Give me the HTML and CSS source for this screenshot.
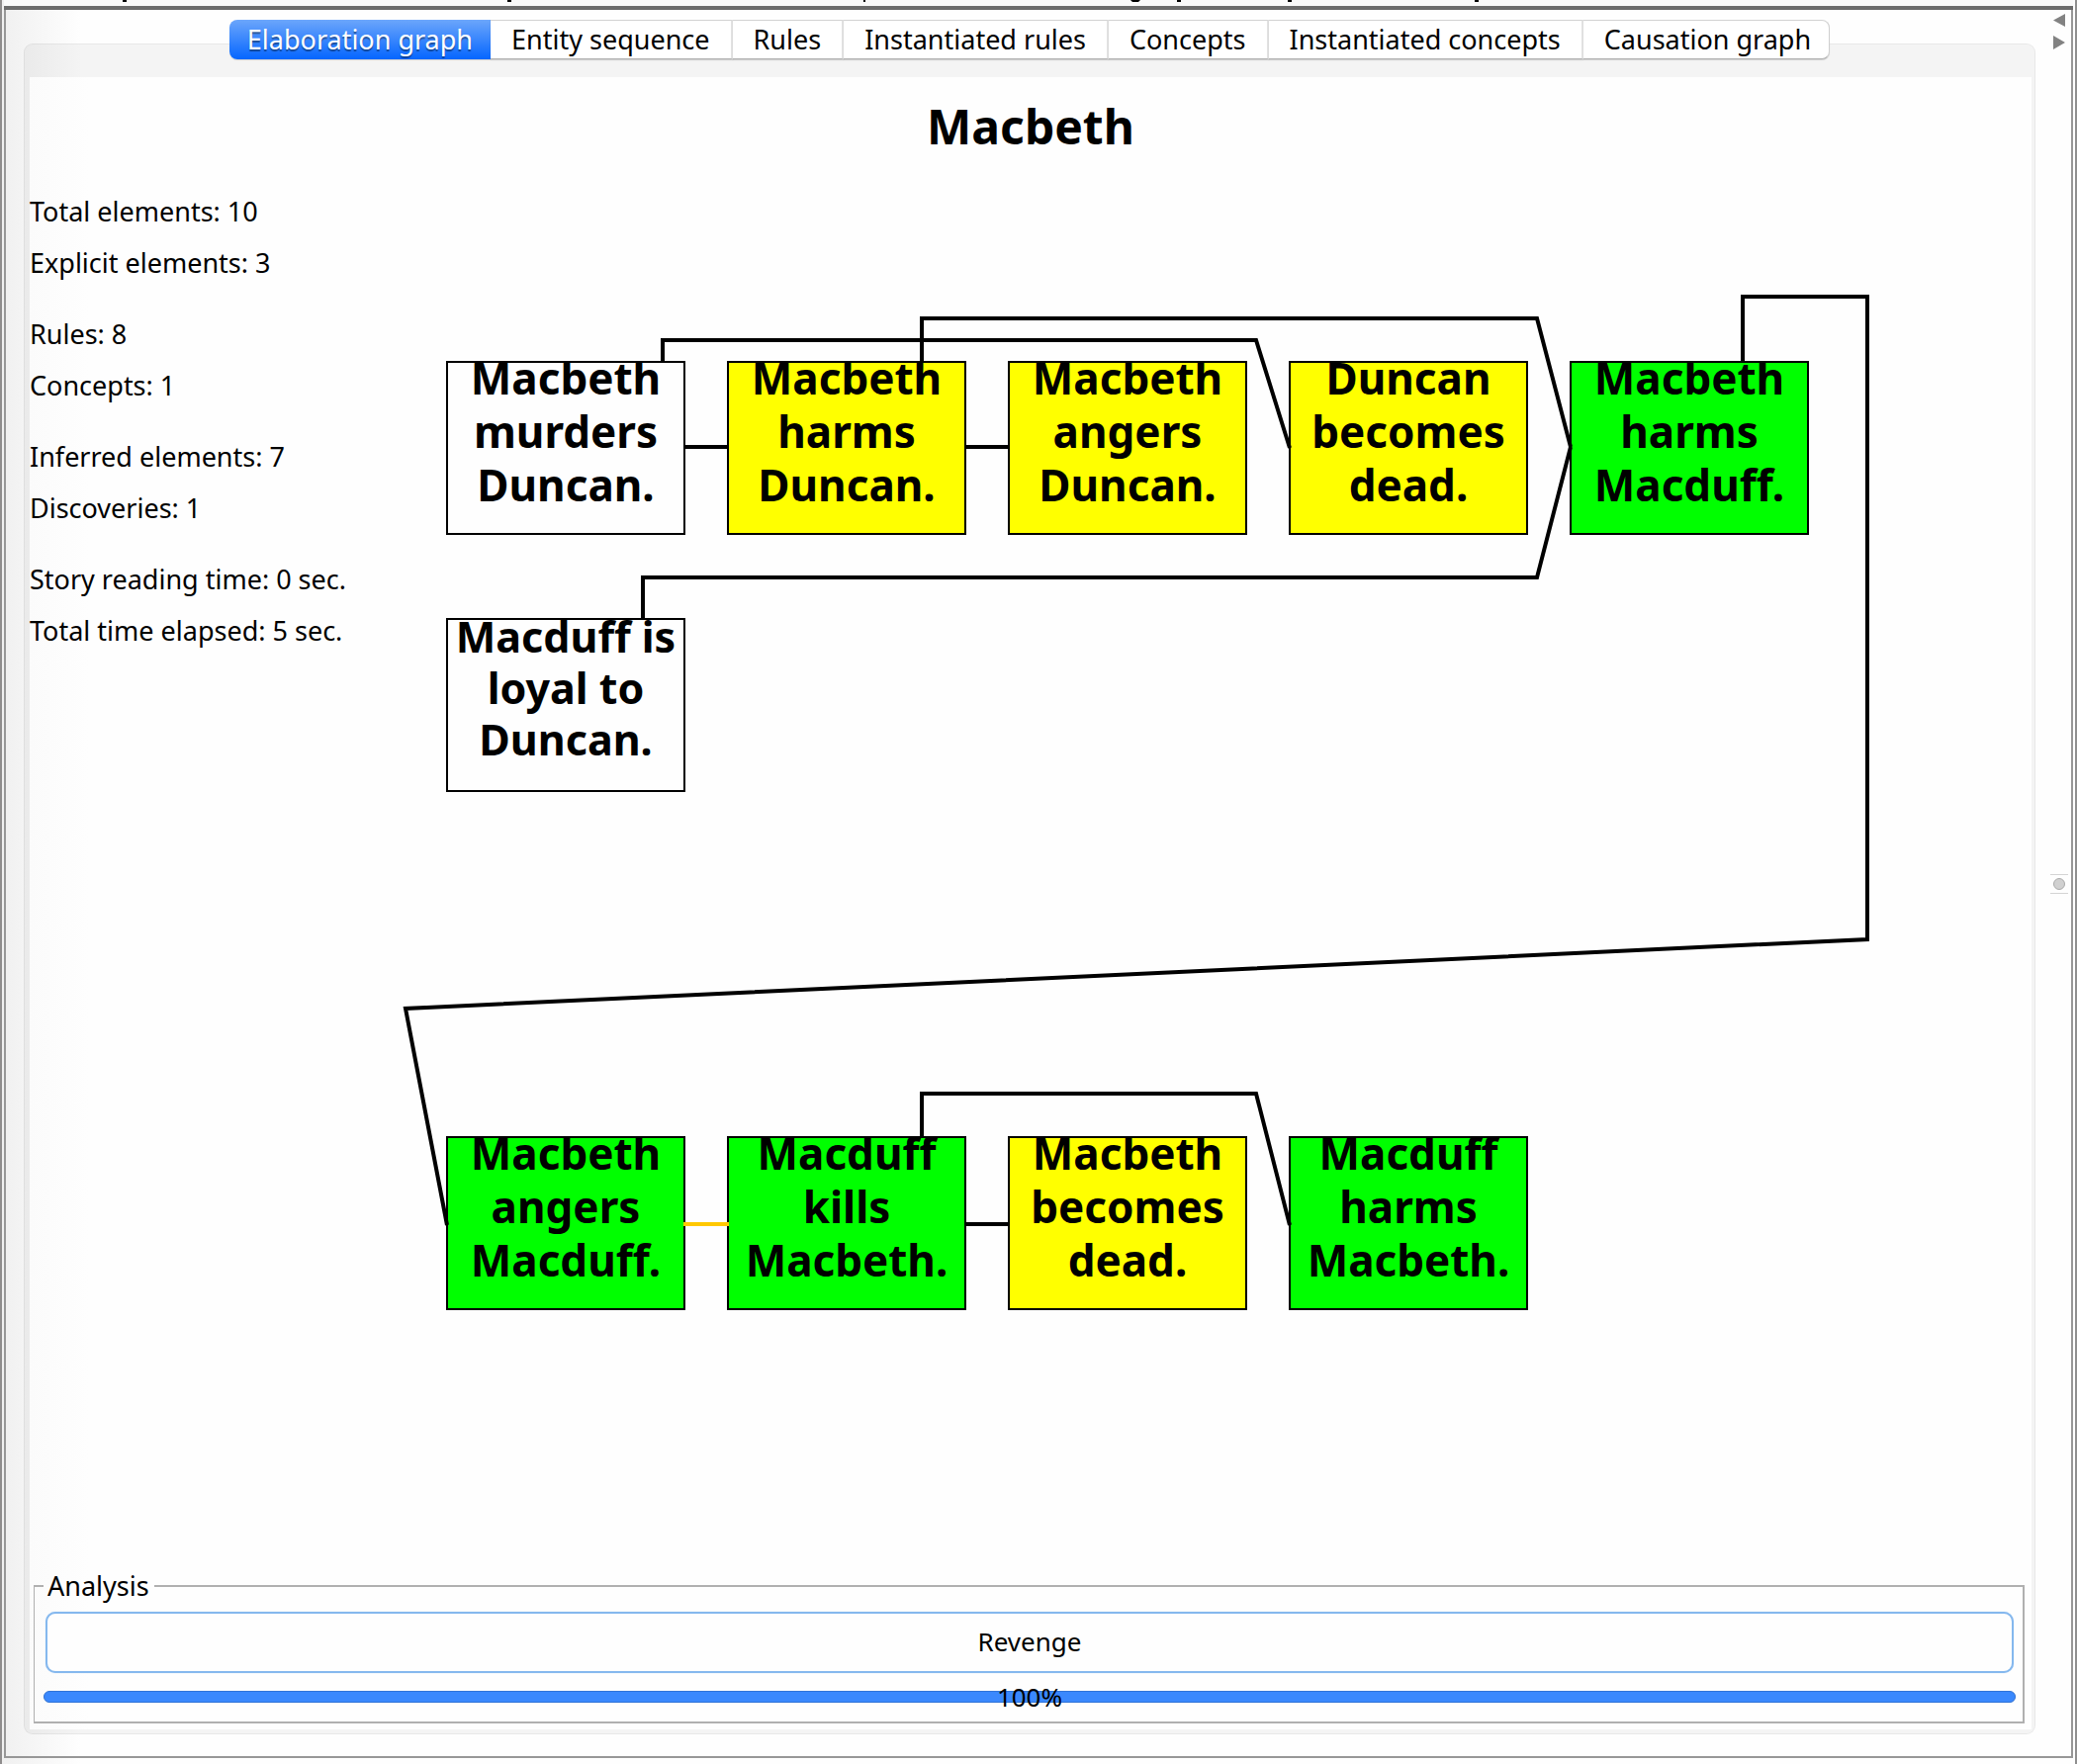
FILE: index.html
```
<!DOCTYPE html>
<html lang="en">
<head>
<meta charset="utf-8">
<title>Macbeth</title>
<link rel="stylesheet" href="styles.css">
</head>
<body>
<div class="window">
  <div class="strip">
    <svg class="strip-marks" width="1600" height="2" aria-hidden="true">
      <path d="M120 0h4v2h-4zM509 0h4v2h-4zM869 0h2v2h-2zM1139 0h10l-2 2h-6zM1186 0h4v2h-4zM1298 0h4v2h-4zM1487 0h4v2h-4z"/>
    </svg>
  </div>
  <div class="frame">
    <main class="viewer">
      <nav class="tabs" role="tablist" aria-label="Views">
        <button class="tab tab-active" role="tab" aria-selected="true">Elaboration graph</button>
        <button class="tab" role="tab">Entity sequence</button>
        <button class="tab" role="tab">Rules</button>
        <button class="tab" role="tab">Instantiated rules</button>
        <button class="tab" role="tab">Concepts</button>
        <button class="tab" role="tab">Instantiated concepts</button>
        <button class="tab" role="tab">Causation graph</button>
      </nav>
      <section class="panel">
        <div class="content">
          <h1 class="title">Macbeth</h1>
          <div class="story">
            <aside class="stats">
              <div><p>Total elements: 10</p><p>Explicit elements: 3</p></div>
              <div><p>Rules: 8</p><p>Concepts: 1</p></div>
              <div><p>Inferred elements: 7</p><p>Discoveries: 1</p></div>
              <div><p>Story reading time: 0 sec.</p><p>Total time elapsed: 5 sec.</p></div>
            </aside>
            <div class="graph">
              <div class="node col-1 row-1"><p>Macbeth<br>murders<br>Duncan.</p></div>
              <div class="node col-2 row-1 inferred"><p>Macbeth<br>harms<br>Duncan.</p></div>
              <div class="node col-3 row-1 inferred"><p>Macbeth<br>angers<br>Duncan.</p></div>
              <div class="node col-4 row-1 inferred"><p>Duncan<br>becomes<br>dead.</p></div>
              <div class="node col-5 row-1 concept"><p>Macbeth<br>harms<br>Macduff.</p></div>
              <div class="node col-1 row-2 compact"><p>Macduff is<br>loyal to<br>Duncan.</p></div>
              <div class="node col-1 row-3 concept"><p>Macbeth<br>angers<br>Macduff.</p></div>
              <div class="node col-2 row-3 concept"><p>Macduff<br>kills<br>Macbeth.</p></div>
              <div class="node col-3 row-3 inferred"><p>Macbeth<br>becomes<br>dead.</p></div>
              <div class="node col-4 row-3 concept"><p>Macduff<br>harms<br>Macbeth.</p></div>
              <svg class="edges" width="1500" height="1060" viewBox="400 280 1500 1060" aria-hidden="true">
                <path d="M691 452H737M975 452H1021M975 1238H1021"/>
                <path d="M670 367V344H1270L1304 453"/>
                <path d="M932 367V322H1554L1588 452"/>
                <path d="M650 627V584H1554L1588 452"/>
                <path d="M1762 367V300H1888V950L410 1020L452 1239"/>
                <path d="M932 1151V1106H1270L1304 1239"/>
                <path class="edge-hot" d="M691 1238H737"/>
              </svg>
            </div>
          </div>
          <fieldset class="analysis">
            <legend>Analysis</legend>
            <div class="analysis-body">
              <button class="concept-button">Revenge</button>
              <div class="meter">
                <progress class="bar" id="done" value="100" max="100"></progress>
                <label class="meter-label" for="done">100%</label>
              </div>
            </div>
          </fieldset>
        </div>
      </section>
    </main>
    <div class="divider">
      <svg width="12" height="36" viewBox="0 0 12 36" aria-hidden="true"><path fill="#828282" d="M12 0V13L0 6.500ZM0 22L12 29L0 36Z"/></svg>
      <div class="grip"><span class="grip-dot"></span></div>
    </div>
  </div>
</div>
</body>
</html>
```
FILE: styles.css
```
* { box-sizing: border-box; }

body {
  margin: 0;
  background: #fefefe;
  color: #000;
  font: 27px/32px "Noto Sans", "Open Sans", sans-serif;
}

button { font: inherit; color: inherit; }

.window {
  display: flex;
  flex-direction: column;
  min-height: 100vh;
  padding: 0 2px 6px;
  border-left: 2px solid #8f8d8d;
  border-right: 2px solid #8f8f8f;
  background: linear-gradient(90deg, #f0f0f0, #fefefe 80px);
}

.strip {
  height: 10px;
  border-bottom: 4px solid #6c6c6c;
  background: #fafafa;
}

.strip-marks { display: block; }

.frame {
  flex: 1;
  display: flex;
  border: 2px solid #979797;
  border-top: 0;
}

.viewer {
  flex: 1;
  min-width: 0;
  display: flex;
  flex-direction: column;
  padding: 10px 0 22px 18px;
}

.tabs {
  display: flex;
  justify-content: center;
  position: relative;
  z-index: 1;
  margin-bottom: -16px;
}

.tab {
  height: 40px;
  padding: 0 21px;
  border: 1px solid #d2d2d2;
  border-bottom-color: #b0b0b0;
  border-left: 0;
  border-right: 2px solid #e2e2e2;
  background: #fff;
  box-shadow: 0 1px 1px rgba(0, 0, 0, 0.15);
  line-height: 38px;
  white-space: nowrap;
}

.tab:last-child {
  padding-right: 18px;
  border-right: 1px solid #cfcfcf;
  border-radius: 0 8px 8px 0;
}

.tab-active {
  padding: 0 18px;
  border: 0;
  border-radius: 8px 0 0 8px;
  background: linear-gradient(#6ca6fb, #0566ff);
  color: #fff;
  text-shadow: 0 2px 1px rgba(0, 0, 0, 0.4);
}

.panel {
  flex: 1;
  display: flex;
  padding: 33px 3px 4px 5px;
  border: 1px solid rgba(0, 0, 0, 0.05);
  border-radius: 9px;
  background: rgba(0, 0, 0, 0.04);
}

.content {
  flex: 1;
  display: flex;
  flex-direction: column;
  padding: 18px 0 6px;
  background: linear-gradient(90deg, #fbfbfb, #fefefe 60px);
}

.title {
  margin: 0;
  font-size: 48px;
  line-height: 64px;
  text-align: center;
}

.story {
  flex: 1;
  display: flex;
}

.stats {
  display: flex;
  flex-direction: column;
  gap: 20px;
  width: 370px;
  padding-top: 28px;
  line-height: 52px;
}

.stats p { margin: 0; }

.graph {
  position: relative;
  flex: 1;
  padding-top: 120px;
}

.edges {
  position: relative;
  display: block;
  fill: none;
  stroke: #000;
  stroke-width: 4;
}

.edge-hot { stroke: #ffc800; }

.node {
  position: absolute;
  width: 242px;
  height: 176px;
  border: 2px solid #000;
  font-size: 44px;
  font-weight: 700;
  line-height: 54px;
  text-align: center;
  white-space: nowrap;
}

/* Labels start above the top edge of their box. */
.node p { margin: -12px 0 0; }

.node.compact { font-size: 43px; line-height: 52px; }
.node.compact p { margin-top: -9px; }
.inferred { background: #ff0; }
.concept { background: #0f0; }

.col-1 { left: 51px; }
.col-2 { left: 335px; }
.col-3 { left: 619px; }
.col-4 { left: 903px; }
.col-5 { left: 1187px; }
.row-1 { top: 205px; }
.row-2 { top: 465px; }
.row-3 { top: 989px; }

.analysis {
  min-width: 0;
  margin: 0 7px 0 4px;
  padding: 10px 7px 9px 9px;
  border: 2px solid #b0b0b0;
  border-left-width: 1px;
}

.analysis legend { padding: 0 5px 0 4px; }

.analysis-body { font-size: 26px; }

.concept-button {
  display: block;
  width: calc(100% - 4px);
  height: 62px;
  margin: 0 2px;
  padding: 0 0 2px;
  border: 2px solid #85b8ee;
  border-radius: 10px;
  background: #fefefe;
  box-shadow: 0 0 1px #9cc8f5;
}

.meter {
  display: grid;
  align-items: center;
  justify-items: center;
  padding-top: 8px;
}

.bar,
.meter-label { grid-area: 1 / 1; }

.bar {
  appearance: none;
  width: 100%;
  height: 12px;
  border: 0;
}

.bar::-webkit-progress-bar { background: #ddd; border-radius: 6px; }

.bar::-webkit-progress-value {
  border: 1px solid #2f73d8;
  border-radius: 6px;
  background: #3a88fd;
}

.meter-label { position: relative; }

.divider {
  width: 36px;
  display: flex;
  flex-direction: column;
  align-items: center;
  padding: 4px 0 38px 12px;
}

.grip {
  margin: auto;
  width: 18px;
  height: 20px;
  border: solid #d4d4d4;
  border-width: 1px 0;
}

.grip-dot {
  display: block;
  width: 12px;
  height: 12px;
  margin: 3px;
  border: 1px solid #aaa;
  border-radius: 50%;
  background: #d0d0d0;
}
```
